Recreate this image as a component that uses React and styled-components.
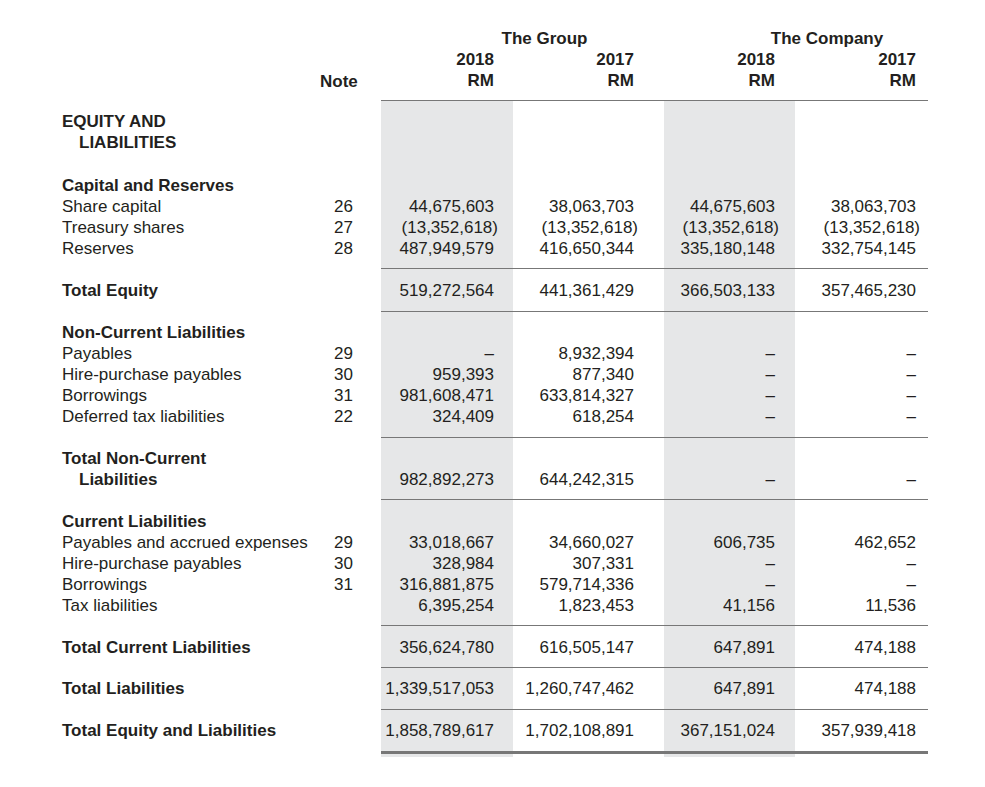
import styled, {createGlobalStyle} from "styled-components";

const GlobalStyle = createGlobalStyle`
  body {
    margin: 0;
    background: #ffffff;
    font-family: "Liberation Sans", Arial, sans-serif;
    color: #231f20;
  }
`

// shading + right padding of the four money columns
const COLS = [
  {shade: true, pr: 19},
  {shade: false, pr: 30},
  {shade: true, pr: 20},
  {shade: false, pr: 12},
]

const SECTIONS = [
  {
    pt: 10, pb: 9,
    rows: [
      {label: "EQUITY AND", bold: true},
      {label: "LIABILITIES", bold: true, indent: true},
      {label: "Capital and Reserves", bold: true, gap: 22},
      {label: "Share capital", note: "26", values: ["44,675,603", "38,063,703", "44,675,603", "38,063,703"]},
      {label: "Treasury shares", note: "27", values: ["(13,352,618)", "(13,352,618)", "(13,352,618)", "(13,352,618)"]},
      {label: "Reserves", note: "28", values: ["487,949,579", "416,650,344", "335,180,148", "332,754,145"]},
    ],
  },
  {
    pt: 11, pb: 10,
    rows: [
      {label: "Total Equity", bold: true, values: ["519,272,564", "441,361,429", "366,503,133", "357,465,230"]},
    ],
  },
  {
    pt: 10, pb: 10,
    rows: [
      {label: "Non-Current Liabilities", bold: true},
      {label: "Payables", note: "29", values: ["–", "8,932,394", "–", "–"]},
      {label: "Hire-purchase payables", note: "30", values: ["959,393", "877,340", "–", "–"]},
      {label: "Borrowings", note: "31", values: ["981,608,471", "633,814,327", "–", "–"]},
      {label: "Deferred tax liabilities", note: "22", values: ["324,409", "618,254", "–", "–"]},
    ],
  },
  {
    pt: 10, pb: 9,
    rows: [
      {label: "Total Non-Current", bold: true},
      {label: "Liabilities", bold: true, indent: true, values: ["982,892,273", "644,242,315", "–", "–"]},
    ],
  },
  {
    pt: 11, pb: 9,
    rows: [
      {label: "Current Liabilities", bold: true},
      {label: "Payables and accrued expenses", note: "29", values: ["33,018,667", "34,660,027", "606,735", "462,652"]},
      {label: "Hire-purchase payables", note: "30", values: ["328,984", "307,331", "–", "–"]},
      {label: "Borrowings", note: "31", values: ["316,881,875", "579,714,336", "–", "–"]},
      {label: "Tax liabilities", values: ["6,395,254", "1,823,453", "41,156", "11,536"]},
    ],
  },
  {
    pt: 11, pb: 9,
    rows: [
      {label: "Total Current Liabilities", bold: true, values: ["356,624,780", "616,505,147", "647,891", "474,188"]},
    ],
  },
  {
    pt: 10, pb: 10,
    rows: [
      {label: "Total Liabilities", bold: true, values: ["1,339,517,053", "1,260,747,462", "647,891", "474,188"]},
    ],
  },
  {
    pt: 10, pb: 10, thick: true,
    rows: [
      {label: "Total Equity and Liabilities", bold: true, values: ["1,858,789,617", "1,702,108,891", "367,151,024", "357,939,418"]},
    ],
  },
]

const Amount = ({value}) => {
  if (value && value.startsWith("(")) {
    return <>{value.slice(0, -1)}<Hang>)</Hang></>
  }
  return value || ""
}

const App = () => {
  return (
    <Page>
      <GlobalStyle/>
      <Sheet>
        <colgroup>
          <col style={{width: 258}}/>
          <col style={{width: 33}}/>
          <col style={{width: 28}}/>
          <col style={{width: 132}}/>
          <col style={{width: 151}}/>
          <col style={{width: 131}}/>
          <col style={{width: 133}}/>
        </colgroup>
        <thead>
          <tr>
            <HeadCell colSpan={3}/>
            <GroupHead colSpan={2} $pl={74} $pr={30}>The Group</GroupHead>
            <GroupHead colSpan={2} $pl={74} $pr={12}>The Company</GroupHead>
          </tr>
          <tr>
            <HeadCell colSpan={3}/>
            {["2018", "2017", "2018", "2017"].map((y, i) => (
              <HeadCell key={i} $right $pr={COLS[i].pr}>{y}</HeadCell>
            ))}
          </tr>
          <tr>
            <HeadCell/>
            <HeadCell $right $pb={9}>Note</HeadCell>
            <HeadCell/>
            {COLS.map((c, i) => (
              <HeadCell key={i} $right $pr={c.pr} $pb={9} $rule>RM</HeadCell>
            ))}
          </tr>
        </thead>
        {SECTIONS.map((s, si) => (
          <tbody key={si}>
            {s.rows.map((r, ri) => {
              const pt = (ri === 0 ? s.pt : 0) + (r.gap || 0)
              const pb = ri === s.rows.length - 1 ? s.pb : 0
              return (
                <tr key={ri}>
                  <Label $bold={r.bold} $indent={r.indent} $pt={pt} $pb={pb}>{r.label}</Label>
                  <Note $pt={pt} $pb={pb}>{r.note}</Note>
                  <Blank $pt={pt} $pb={pb}/>
                  {COLS.map((c, i) => (
                    <Num key={i} $shade={c.shade} $pr={c.pr} $pt={pt} $pb={pb}>
                      <Amount value={r.values && r.values[i]}/>
                    </Num>
                  ))}
                </tr>
              )
            })}
            <tr>
              <RuleGap colSpan={3}/>
              <Rule colSpan={4} $h={s.thick ? 3 : 1}/>
            </tr>
            {s.thick && (
              <tr>
                <RuleGap colSpan={3}/>
                {COLS.map((c, i) => <Tail key={i} $shade={c.shade}/>)}
              </tr>
            )}
          </tbody>
        ))}
      </Sheet>
    </Page>
  )
}

const Page = styled.div`
  padding: 28px 0 0 62px;
`

const Sheet = styled.table`
  table-layout: fixed;
  width: 866px;
  border-collapse: separate;
  border-spacing: 0;
  font-size: 17px;
  line-height: 21px;
  & td, & th {
    padding: 0;
  }
`

const HeadCell = styled.th`
  font-weight: bold;
  text-align: ${p => p.$right ? "right" : "left"};
  padding-right: ${p => p.$pr || 0}px !important;
  padding-bottom: ${p => p.$pb || 0}px !important;
  border-bottom: ${p => p.$rule ? "1px solid #777777" : "none"};
  white-space: nowrap;
`

const GroupHead = styled.th`
  font-weight: bold;
  text-align: center;
  padding-left: ${p => p.$pl}px !important;
  padding-right: ${p => p.$pr}px !important;
  white-space: nowrap;
`

const Cell = styled.td`
  padding-top: ${p => p.$pt || 0}px !important;
  padding-bottom: ${p => p.$pb || 0}px !important;
  vertical-align: top;
  white-space: nowrap;
`

const Label = styled(Cell)`
  font-weight: ${p => p.$bold ? "bold" : "normal"};
  padding-left: ${p => p.$indent ? 17 : 0}px !important;
`

const Note = styled(Cell)`
  text-align: right;
`

const Blank = styled(Cell)``

const Num = styled(Cell)`
  text-align: right;
  padding-right: ${p => p.$pr}px !important;
  background: ${p => p.$shade ? "#e6e7e8" : "transparent"};
`

const Hang = styled.span`
  margin-right: -4px;
`

const RuleGap = styled.td`
  height: 0;
  line-height: 0;
  font-size: 0;
`

const Rule = styled.td`
  height: ${p => p.$h}px;
  line-height: 0;
  font-size: 0;
  background: #777777;
`

const Tail = styled.td`
  height: 3px;
  line-height: 0;
  font-size: 0;
  background: ${p => p.$shade ? "#e6e7e8" : "transparent"};
`

export default App
